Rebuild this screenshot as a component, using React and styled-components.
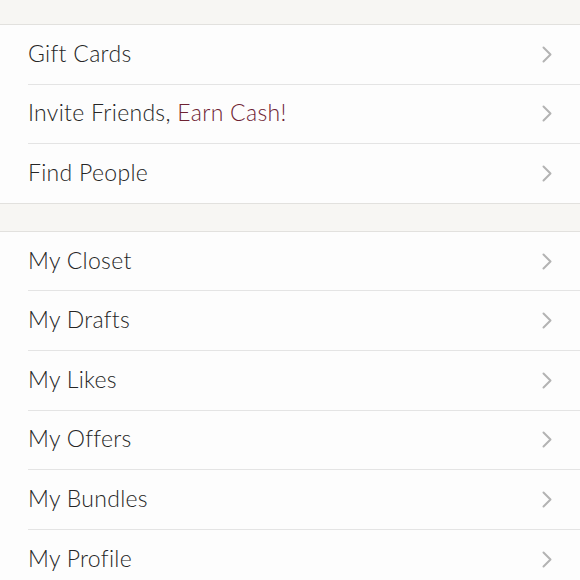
import React from 'react';
import styled, { createGlobalStyle } from 'styled-components';

const GlobalStyle = createGlobalStyle`
  body {
    margin: 0;
    background: #fdfdfd;
    font-family: Lato, "Noto Sans", sans-serif;
  }
`;

const sections = [
  [
    { label: 'Gift Cards' },
    { label: 'Invite Friends, ', accent: 'Earn Cash!' },
    { label: 'Find People' },
  ],
  [
    { label: 'My Closet' },
    { label: 'My Drafts' },
    { label: 'My Likes' },
    { label: 'My Offers' },
    { label: 'My Bundles' },
    { label: 'My Profile' },
  ],
];

function Chevron() {
  return (
    <ChevronIcon width="10" height="17" viewBox="0 0 10 17">
      <path d="M1.5 1.5 L8.5 8.5 L1.5 15.5" />
    </ChevronIcon>
  );
}

function App() {
  return (
    <Page>
      <GlobalStyle />
      {sections.map((items, i) => (
        <React.Fragment key={i}>
          <Spacer $height={i === 0 ? 24 : 27} />
          <Section>
            {items.map((item) => (
              <Row key={item.label}>
                <Label>
                  {item.label}
                  {item.accent && <Accent>{item.accent}</Accent>}
                </Label>
                <Chevron />
              </Row>
            ))}
          </Section>
        </React.Fragment>
      ))}
    </Page>
  );
}

export default App;

const Page = styled.div`
  width: 580px;
  height: 580px;
  overflow: hidden;
  background: #fdfdfd;
`;

const Spacer = styled.div`
  height: ${(p) => p.$height}px;
  background: #f7f6f3;
  border-bottom: 1px solid #e2e1de;
`;

const Section = styled.div`
  background: #fdfdfd;
  border-bottom: 1px solid #e2e1de;
`;

const Row = styled.div`
  display: flex;
  align-items: center;
  justify-content: space-between;
  height: 58.6px;
  margin-left: 28px;
  padding-right: 28px;
  border-bottom: 1px solid #e4e4e4;
  &:last-child {
    border-bottom: none;
  }
`;

const Label = styled.span`
  font-size: 23px;
  font-weight: 300;
  color: #262626;
  letter-spacing: 0.3px;
  margin-top: -3px;
`;

const Accent = styled.span`
  color: #6e2232;
`;

const ChevronIcon = styled.svg`
  fill: none;
  stroke: #b3b3b3;
  stroke-width: 2;
  stroke-linecap: round;
  stroke-linejoin: round;
`;
